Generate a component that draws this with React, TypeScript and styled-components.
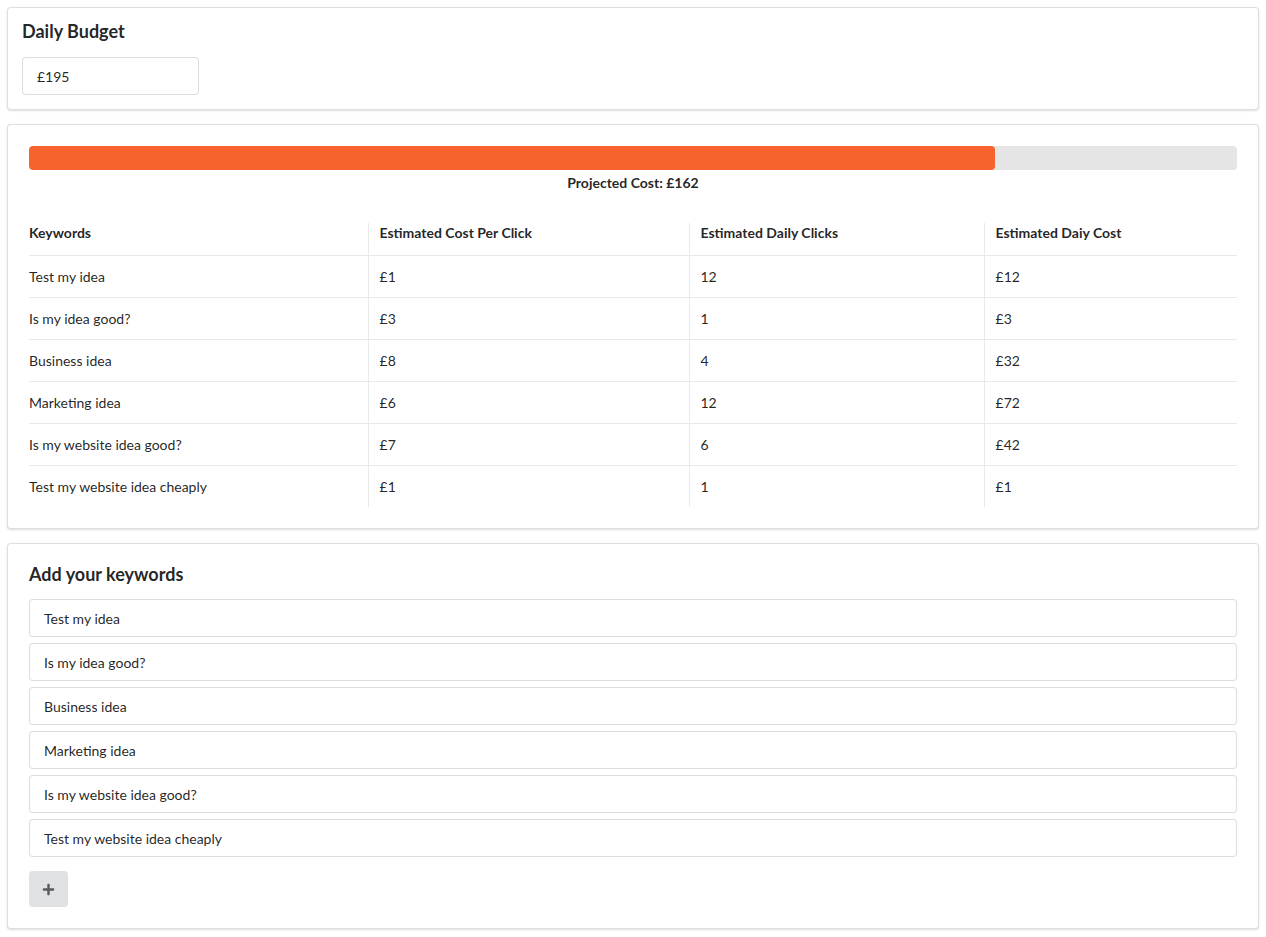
import React from 'react';
import styled, { createGlobalStyle } from 'styled-components';
import { FaPlus } from 'react-icons/fa';

const keywords = [
  { name: 'Test my idea', cpc: 1, clicks: 12 },
  { name: 'Is my idea good?', cpc: 3, clicks: 1 },
  { name: 'Business idea', cpc: 8, clicks: 4 },
  { name: 'Marketing idea', cpc: 6, clicks: 12 },
  { name: 'Is my website idea good?', cpc: 7, clicks: 6 },
  { name: 'Test my website idea cheaply', cpc: 1, clicks: 1 },
];

const columns = [
  { label: 'Keywords', width: 339 },
  { label: 'Estimated Cost Per Click', width: 321 },
  { label: 'Estimated Daily Clicks', width: 295 },
  { label: 'Estimated Daiy Cost', width: 253 },
];

const App = () => {
  return (
    <>
      <GlobalStyle />
      <Page>
        <Segment>
          <Title>Daily Budget</Title>
          <BudgetInput defaultValue="£195" />
        </Segment>

        <Segment padded>
          <Progress>
            <Bar style={{ width: '80%' }} />
          </Progress>
          <ProgressLabel>Projected Cost: £162</ProgressLabel>
          <Table>
            <colgroup>
              {columns.map((c) => (
                <Col key={c.label} width={c.width} />
              ))}
            </colgroup>
            <thead>
              <tr>
                {columns.map((c) => (
                  <Th key={c.label}>{c.label}</Th>
                ))}
              </tr>
            </thead>
            <tbody>
              {keywords.map((k) => (
                <tr key={k.name}>
                  <Td>{k.name}</Td>
                  <Td>£{k.cpc}</Td>
                  <Td>{k.clicks}</Td>
                  <Td>£{k.cpc * k.clicks}</Td>
                </tr>
              ))}
            </tbody>
          </Table>
        </Segment>

        <Segment padded>
          <Title>Add your keywords</Title>
          <KeywordList>
            {keywords.map((k) => (
              <KeywordInput key={k.name} defaultValue={k.name} />
            ))}
          </KeywordList>
          <AddButton>
            <FaPlus size={13} />
          </AddButton>
        </Segment>
      </Page>
    </>
  );
};

export default App;

const GlobalStyle = createGlobalStyle`
  body {
    margin: 0;
    background: #fff;
    font-family: Lato, 'Helvetica Neue', Arial, sans-serif;
    font-size: 14px;
    color: rgba(0, 0, 0, 0.87);
  }
`;

const Page = styled.div`
  display: flex;
  flex-direction: column;
  gap: 14px;
  padding: 7px 7px 8px;
`;

const Segment = styled.div<{ padded?: boolean }>`
  background: #fff;
  border: 1px solid rgba(34, 36, 38, 0.15);
  border-radius: 4px;
  box-shadow: 0 1px 2px 0 rgba(34, 36, 38, 0.15);
  padding: ${(p) => (p.padded ? '21px' : '14px')};
`;

const Title = styled.h3`
  margin: 0;
  font-size: 18px;
  line-height: 18px;
  font-weight: 700;
  color: rgba(0, 0, 0, 0.87);
`;

const BudgetInput = styled.input`
  display: block;
  box-sizing: border-box;
  margin-top: 17px;
  width: 177px;
  height: 38px;
  padding: 0 14px;
  border: 1px solid rgba(34, 36, 38, 0.15);
  border-radius: 4px;
  font-family: inherit;
  font-size: 14px;
  color: rgba(0, 0, 0, 0.87);
  outline: none;
`;

const Progress = styled.div`
  height: 24px;
  background: rgba(0, 0, 0, 0.1);
  border-radius: 4px;
  overflow: hidden;
`;

const Bar = styled.div`
  height: 100%;
  background: #f6632c;
  border-radius: 4px;
`;

const ProgressLabel = styled.div`
  margin-top: 4px;
  text-align: center;
  font-weight: 700;
  font-size: 14px;
  line-height: 18px;
`;

const Table = styled.table`
  width: 100%;
  margin-top: 31px;
  border-collapse: collapse;
  table-layout: fixed;
`;

const Col = styled.col<{ width: number }>`
  width: ${(p) => p.width}px;
`;

const Th = styled.th`
  text-align: left;
  font-weight: 700;
  font-size: 14px;
  line-height: 19px;
  padding: 0 11px 13px;
  border-bottom: 1px solid rgba(34, 36, 38, 0.1);

  & + & {
    border-left: 1px solid rgba(34, 36, 38, 0.1);
  }

  &:first-child {
    padding-left: 0;
  }
`;

const Td = styled.td`
  font-size: 14px;
  line-height: 19px;
  padding: 11px 11px;

  & + & {
    border-left: 1px solid rgba(34, 36, 38, 0.1);
  }

  &:first-child {
    padding-left: 0;
  }

  tr + tr > & {
    border-top: 1px solid rgba(34, 36, 38, 0.1);
  }
`;

const KeywordList = styled.div`
  display: flex;
  flex-direction: column;
  gap: 6px;
  margin-top: 16px;
`;

const KeywordInput = styled.input`
  box-sizing: border-box;
  width: 100%;
  height: 38px;
  padding: 0 14px;
  border: 1px solid rgba(34, 36, 38, 0.15);
  border-radius: 4px;
  font-family: inherit;
  font-size: 14px;
  color: rgba(0, 0, 0, 0.87);
  outline: none;
`;

const AddButton = styled.button`
  display: flex;
  align-items: center;
  justify-content: center;
  margin-top: 14px;
  width: 39px;
  height: 36px;
  padding: 0;
  border: none;
  border-radius: 4px;
  background: #e0e1e2;
  color: rgba(0, 0, 0, 0.6);
  cursor: pointer;
`;
